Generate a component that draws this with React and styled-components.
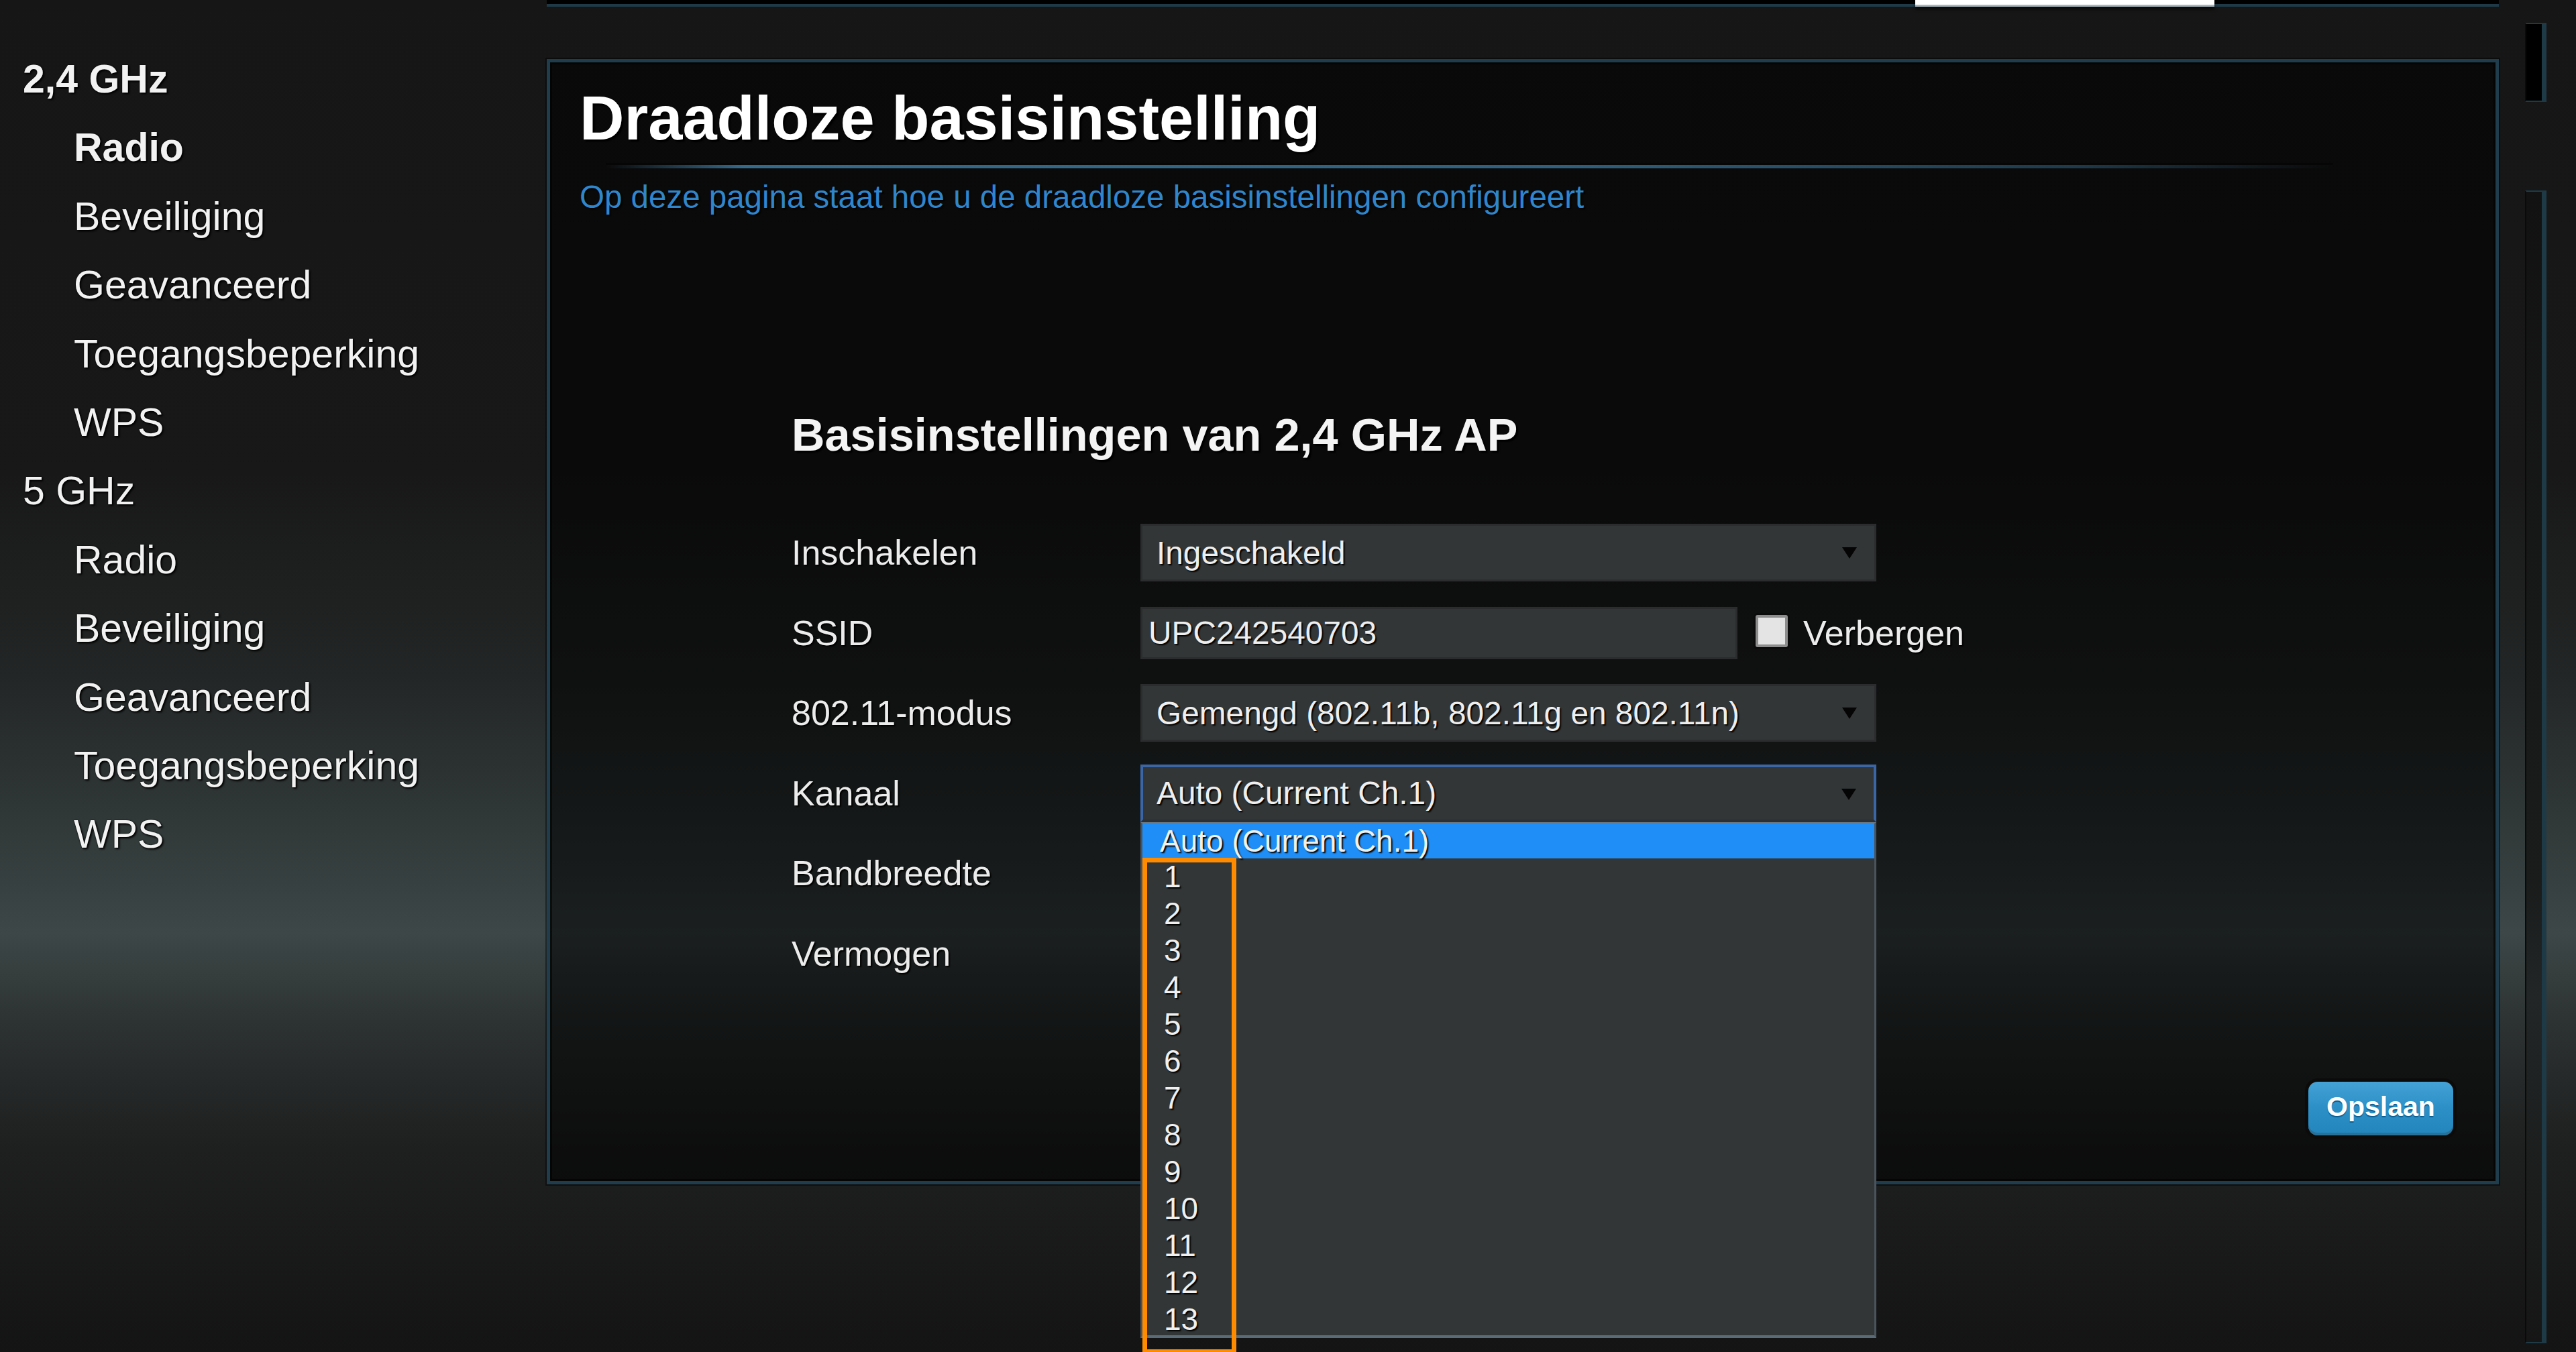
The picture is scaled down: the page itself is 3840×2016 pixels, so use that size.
import React from "react";
import styled, { createGlobalStyle } from "styled-components";

const GlobalStyle = createGlobalStyle`
  html, body {
    margin: 0;
    padding: 0;
  }
  body {
    background: #151414;
    font-family: "Liberation Sans", Arial, sans-serif;
  }
`;

const Page = styled.div`
  display: flex;
  width: 3840px;
  height: 2016px;
  overflow: hidden;
  background: linear-gradient(
    180deg,
    #171616 0%,
    #181818 35%,
    #232626 50%,
    #323a3a 62%,
    #3d4747 69%,
    #2c3131 76%,
    #1e1f1f 85%,
    #141414 100%
  );
`;

const Sidebar = styled.nav`
  width: 815px;
  flex-shrink: 0;
  padding: 67px 0 0 34px;
  box-sizing: border-box;
`;

const NavLink = styled.div`
  font-size: 59px;
  line-height: 102.4px;
  color: #f2f2f2;
  font-weight: ${(props) => (props.$active ? "bold" : "normal")};
  padding-left: ${(props) => (props.$sub ? "76px" : "0")};
  text-shadow: 2px 2px 3px #000, 0 0 2px #000;
  white-space: nowrap;
`;

const MainColumn = styled.div`
  width: 2910px;
  flex-shrink: 0;
  display: flex;
  flex-direction: column;
`;

const TopBar = styled.div`
  height: 10px;
  box-sizing: border-box;
  background: #000;
  border-bottom: 4px solid #1e3a48;
  display: flex;
  align-items: flex-start;
`;

const TopTab = styled.div`
  margin-left: 2040px;
  width: 446px;
  height: 10px;
  box-sizing: border-box;
  background: #fff;
  border-bottom: 3px solid #a7b6be;
  box-shadow: 0 4px 4px rgba(0, 0, 0, 0.6);
`;

const Panel = styled.section`
  margin-top: 78px;
  height: 1678px;
  box-sizing: border-box;
  border: 5px solid #1f3d4c;
  box-shadow: inset 0 0 0 3px rgba(0, 0, 0, 0.55), 0 0 0 2px rgba(0, 0, 0, 0.45);
  background: rgba(0, 0, 0, 0.56);
  display: flex;
  flex-direction: column;
  padding: 33px 63px 68px 44px;
`;

const Title = styled.h1`
  margin: 0;
  font-size: 92px;
  line-height: 100px;
  font-weight: bold;
  color: #fff;
  text-shadow: 3px 3px 2px #000;
  white-space: nowrap;
`;

const TitleRule = styled.div`
  margin: 20px 179px 0 39px;
  height: 5px;
  background: linear-gradient(
    90deg,
    rgba(47, 93, 120, 0) 0%,
    #35698a 8%,
    #2f5f7c 55%,
    #1e3a4b 85%,
    rgba(20, 30, 40, 0) 100%
  );
  box-shadow: 0 -3px 0 #060606;
`;

const Intro = styled.p`
  margin: 16px 0 0;
  font-size: 47.5px;
  line-height: 54px;
  color: #2f86cc;
  text-shadow: 2px 2px 2px #000;
  white-space: nowrap;
`;

const SectionTitle = styled.h2`
  margin: 288px 0 0 316px;
  font-size: 68.5px;
  line-height: 80px;
  font-weight: bold;
  color: #f4f4f4;
  text-shadow: 3px 3px 2px #000;
  white-space: nowrap;
`;

const Form = styled.div`
  margin: 92px 0 0 316px;
  display: flex;
  flex-direction: column;
  gap: 33.5px;
`;

const Row = styled.div`
  display: flex;
  align-items: center;
  height: 86px;
`;

const Label = styled.div`
  width: 520px;
  flex-shrink: 0;
  font-size: 52px;
  color: #ececec;
  text-shadow: 2px 2px 2px #000;
  white-space: nowrap;
`;

const SelectWrap = styled.div`
  position: relative;
  width: 1097px;
  height: 86px;
`;

const SelectBox = styled.div`
  width: 100%;
  height: 100%;
  box-sizing: border-box;
  background: #333637;
  border: ${(props) => (props.$focused ? "4px solid #3b66a6" : "3px solid #2a2c2d")};
  border-bottom-color: ${(props) => (props.$focused ? "#2b3034" : "#2a2c2d")};
  padding-left: ${(props) => (props.$focused ? "20px" : "21px")};
  display: flex;
  align-items: center;
  font-size: 47.8px;
  color: #eeeeee;
  text-shadow: 2px 2px 2px #000;
  white-space: nowrap;
  position: relative;

  &::after {
    content: "";
    position: absolute;
    right: 26px;
    top: 32px;
    border-left: 11px solid transparent;
    border-right: 11px solid transparent;
    border-top: 17px solid #050505;
  }
`;

const TextInput = styled.div`
  width: 890px;
  height: 78px;
  box-sizing: border-box;
  background: #333637;
  border: 3px solid #2a2c2d;
  padding-left: 9px;
  display: flex;
  align-items: center;
  font-size: 47.8px;
  color: #eeeeee;
  text-shadow: 2px 2px 2px #000;
`;

const CheckLabel = styled.label`
  display: flex;
  align-items: center;
  margin-left: 27px;
  gap: 23px;
  font-size: 52px;
  color: #ececec;
  text-shadow: 2px 2px 2px #000;
`;

const CheckSquare = styled.span`
  width: 48px;
  height: 48px;
  box-sizing: border-box;
  background: #e4e4e4;
  border: 4px solid #8d8d8d;
  border-radius: 3px;
  box-shadow: 0 0 0 3px #0b0b0b;
  margin-top: -6px;
`;

const DropList = styled.div`
  position: absolute;
  top: 100%;
  left: 0;
  width: 100%;
  height: 769px;
  box-sizing: border-box;
  background: #323637;
  border: 3px solid #4a545d;
  border-top: 2px solid #6b7a86;
  border-bottom: 4px solid #5b6a77;
  z-index: 5;
`;

const Option = styled.div`
  height: ${(props) => (props.$selected ? "52px" : "55px")};
  line-height: ${(props) => (props.$selected ? "52px" : "55px")};
  padding-left: ${(props) => (props.$selected ? "26px" : "32px")};
  background: ${(props) => (props.$selected ? "#1f8ef6" : "transparent")};
  font-size: 46px;
  color: #f0f0f0;
  text-shadow: 2px 2px 2px #000;
  white-space: nowrap;
`;

const Highlight = styled.div`
  position: absolute;
  left: 0;
  top: 51px;
  width: 140px;
  height: 740px;
  box-sizing: border-box;
  border: 7px solid #ff8c00;
  pointer-events: none;
`;

const SaveButton = styled.button`
  margin-top: auto;
  align-self: flex-end;
  width: 216px;
  height: 80px;
  border: none;
  border-radius: 14px;
  background: linear-gradient(180deg, #45a2d6 0%, #2d91c8 45%, #2285bc 100%);
  box-shadow: 0 0 0 5px #0d0b0a, inset 0 -4px 0 #2a6f96;
  color: #fff;
  font-family: "Liberation Sans", Arial, sans-serif;
  font-size: 41px;
  font-weight: bold;
  text-shadow: 0 2px 1px #0a5d90;
  padding: 0 0 6px;
`;

const Rail = styled.div`
  margin-left: 39px;
  width: 32px;
  flex-shrink: 0;
  display: flex;
  flex-direction: column;
`;

const RailPiece = styled.div`
  box-sizing: border-box;
  background: ${(props) => props.$bg || "#000"};
  border: 2px solid #1f3a47;
  border-left-color: #0a0a0a;
  border-right-width: 7px;
`;

const sideNav = [
  { text: "2,4 GHz", active: true },
  { text: "Radio", sub: true, active: true },
  { text: "Beveiliging", sub: true },
  { text: "Geavanceerd", sub: true },
  { text: "Toegangsbeperking", sub: true },
  { text: "WPS", sub: true },
  { text: "5 GHz" },
  { text: "Radio", sub: true },
  { text: "Beveiliging", sub: true },
  { text: "Geavanceerd", sub: true },
  { text: "Toegangsbeperking", sub: true },
  { text: "WPS", sub: true },
];

const channels = ["1", "2", "3", "4", "5", "6", "7", "8", "9", "10", "11", "12", "13"];

const App = () => {
  return (
    <Page>
      <GlobalStyle />
      <Sidebar>
        {sideNav.map((item, i) => (
          <NavLink key={i} $sub={item.sub} $active={item.active}>
            {item.text}
          </NavLink>
        ))}
      </Sidebar>

      <MainColumn>
        <TopBar>
          <TopTab />
        </TopBar>
        <Panel>
          <Title>Draadloze basisinstelling</Title>
          <TitleRule />
          <Intro>Op deze pagina staat hoe u de draadloze basisinstellingen configureert</Intro>

          <SectionTitle>Basisinstellingen van 2,4 GHz AP</SectionTitle>

          <Form>
            <Row>
              <Label>Inschakelen</Label>
              <SelectWrap>
                <SelectBox>Ingeschakeld</SelectBox>
              </SelectWrap>
            </Row>
            <Row>
              <Label>SSID</Label>
              <TextInput>UPC242540703</TextInput>
              <CheckLabel>
                <CheckSquare />
                Verbergen
              </CheckLabel>
            </Row>
            <Row>
              <Label>802.11-modus</Label>
              <SelectWrap>
                <SelectBox>Gemengd (802.11b, 802.11g en 802.11n)</SelectBox>
              </SelectWrap>
            </Row>
            <Row>
              <Label>Kanaal</Label>
              <SelectWrap>
                <SelectBox $focused>Auto (Current Ch.1)</SelectBox>
                <DropList>
                  <Option $selected>Auto (Current Ch.1)</Option>
                  {channels.map((c) => (
                    <Option key={c}>{c}</Option>
                  ))}
                  <Highlight />
                </DropList>
              </SelectWrap>
            </Row>
            <Row>
              <Label>Bandbreedte</Label>
            </Row>
            <Row>
              <Label>Vermogen</Label>
            </Row>
          </Form>

          <SaveButton>Opslaan</SaveButton>
        </Panel>
      </MainColumn>

      <Rail>
        <RailPiece style={{ marginTop: 34, height: 118 }} />
        <RailPiece
          $bg="linear-gradient(180deg, #121212 0%, #1a1c1c 60%, #222626 70%, #161616 100%)"
          style={{ marginTop: 132, height: 1719 }}
        />
      </Rail>
    </Page>
  );
};

export default App;
